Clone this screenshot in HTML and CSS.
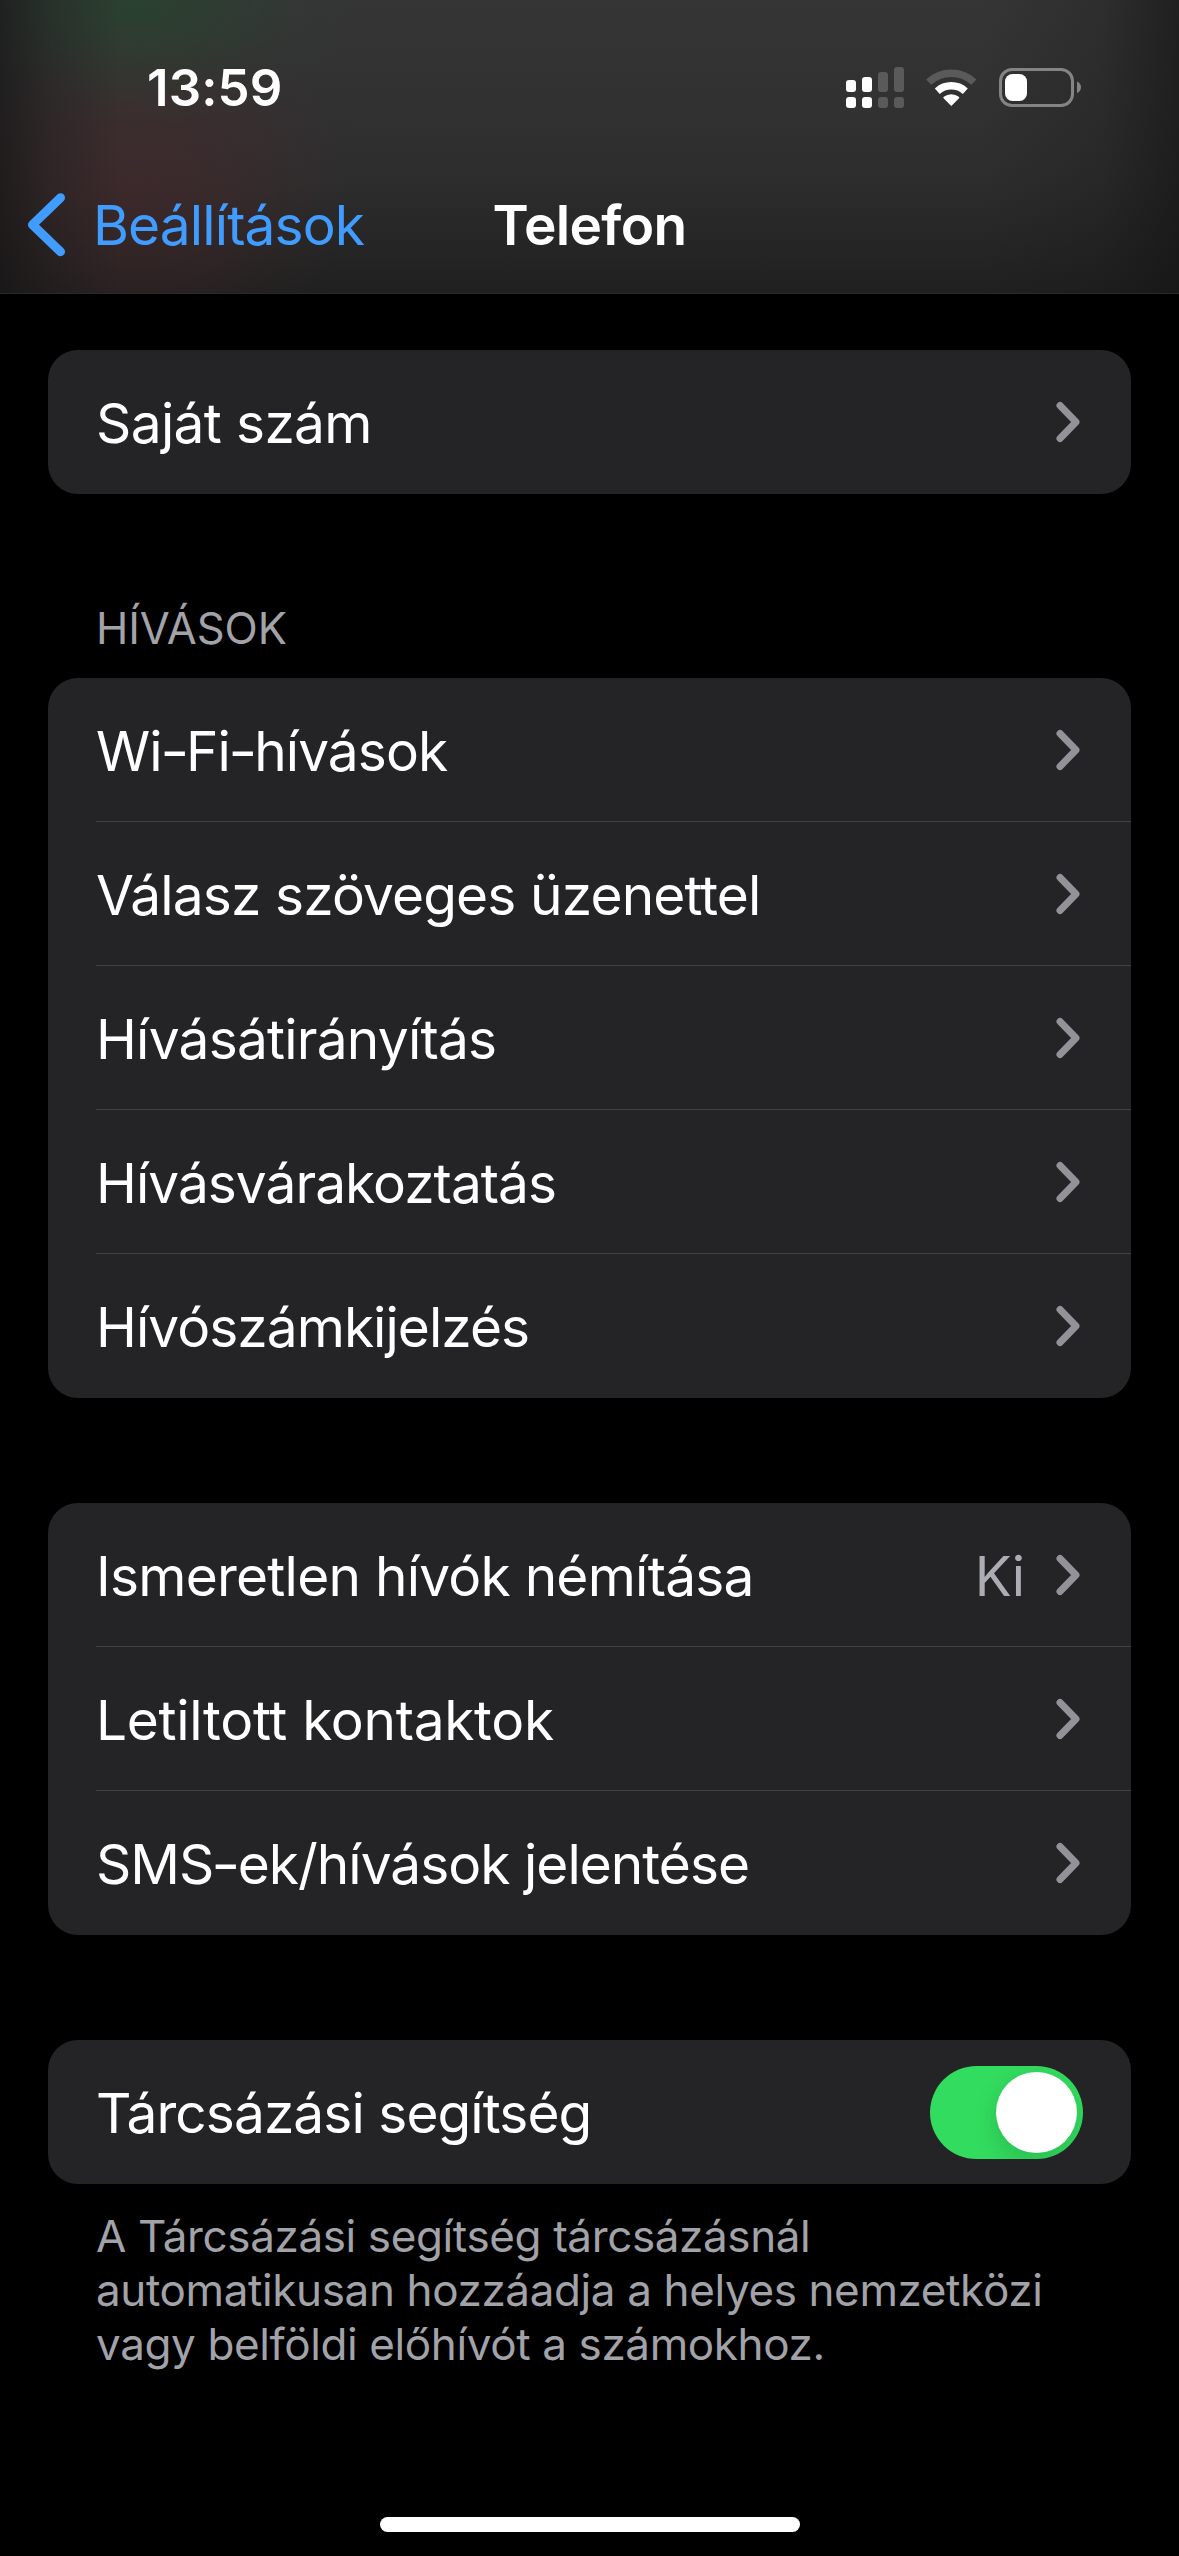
FILE: index.html
```html
<!DOCTYPE html>
<html lang="hu">
<head>
<meta charset="utf-8">
<title>Telefon</title>
<link rel="stylesheet" href="styles.css">
</head>
<body>
<svg class="defs" aria-hidden="true">
  <symbol id="chevron" viewBox="0 0 24 42"><path d="M4 4.500 20 21 4 37.500"/></symbol>
</svg>
<div class="screen">
  <header class="top">
    <div class="status">
      <span class="time">13:59</span>
      <svg class="status-icons" width="240" height="44" viewBox="844 66 240 44" aria-hidden="true">
        <g fill="#fff">
          <rect x="846" y="80" width="10" height="12" rx="3"/>
          <rect x="862" y="77" width="10" height="15" rx="3"/>
          <rect x="846" y="97" width="10" height="11" rx="3"/>
          <rect x="862" y="97" width="10" height="11" rx="3"/>
        </g>
        <g fill="#5a5a5b">
          <rect x="878" y="72" width="10" height="20" rx="3"/>
          <rect x="894" y="67" width="10" height="25" rx="3"/>
          <rect x="878" y="97" width="10" height="11" rx="3"/>
          <rect x="894" y="97" width="10" height="11" rx="3"/>
        </g>
        <path d="M928.7 82.100a33.200 33.200 0 0 1 45.200 0" fill="none" stroke="#5a5a5b" stroke-width="7.400"/>
        <path d="M937.300 91.200a20.800 20.800 0 0 1 28 0" fill="none" stroke="#fff" stroke-width="7.400"/>
        <path d="M951.300 106 943.600 98.300Q942.900 97.500 943.800 96.800a12 12 0 0 1 15 0Q959.700 97.500 959 98.300Z" fill="#fff"/>
        <rect x="1000.500" y="69.500" width="72" height="36" rx="11.500" fill="none" stroke="#848484" stroke-width="3"/>
        <rect x="1005" y="74" width="22" height="27" rx="7.500" fill="#fff"/>
        <path d="M1077 81.500Q1081 83.500 1081 87.300T1077 93.200Z" fill="#848484"/>
      </svg>
    </div>
    <nav class="nav">
      <a class="back">
        <svg class="back-icon" viewBox="0 0 38 64" aria-hidden="true"><path d="M32.500 4.700 4.500 31.700 32.500 58.700"/></svg>
        <span class="back-label">Beállítások</span>
      </a>
      <h1 class="title">Telefon</h1>
    </nav>
  </header>

  <main class="content">
    <section class="card">
      <div class="row"><span class="label t-own">Saját szám</span><svg class="chevron"><use href="#chevron"/></svg></div>
    </section>

    <h2 class="heading">HÍVÁSOK</h2>
    <section class="card">
      <div class="row"><span class="label t-wifi">Wi<span class="dash">-</span>Fi<span class="dash">-</span>hívások</span><svg class="chevron"><use href="#chevron"/></svg></div>
      <div class="row"><span class="label t-reply">Válasz szöveges üzenettel</span><svg class="chevron"><use href="#chevron"/></svg></div>
      <div class="row"><span class="label t-forward">Hívásátirányítás</span><svg class="chevron"><use href="#chevron"/></svg></div>
      <div class="row"><span class="label t-waiting">Hívásvárakoztatás</span><svg class="chevron"><use href="#chevron"/></svg></div>
      <div class="row"><span class="label t-id">Hívószámkijelzés</span><svg class="chevron"><use href="#chevron"/></svg></div>
    </section>

    <section class="card spaced">
      <div class="row"><span class="label t-unknown">Ismeretlen hívók némítása</span><span class="value">Ki</span><svg class="chevron"><use href="#chevron"/></svg></div>
      <div class="row"><span class="label t-blocked">Letiltott kontaktok</span><svg class="chevron"><use href="#chevron"/></svg></div>
      <div class="row"><span class="label t-sms">SMS<span class="dash">-</span>ek/hívások jelentése</span><svg class="chevron"><use href="#chevron"/></svg></div>
    </section>

    <section class="card spaced">
      <div class="row"><span class="label t-assist">Tárcsázási segítség</span><span class="toggle"><span class="knob"></span></span></div>
    </section>
    <p class="note">A Tárcsázási segítség tárcsázásnál<br>automatikusan hozzáadja a helyes nemzetközi<br>vagy belföldi előhívót a számokhoz.</p>
  </main>
  <div class="home"></div>
</div>
</body>
</html>
```
FILE: styles.css
```css
* { box-sizing: border-box; }
body {
  margin: 0;
  background: #000;
  color: #fff;
  font-family: Inter, "Liberation Sans", sans-serif;
}
.defs { display: none; }
.screen {
  display: flex;
  flex-direction: column;
  width: 1179px;
  height: 2556px;
  overflow: hidden;
}
.top {
  height: 294px;
  border-bottom: 1px solid #2a2a2b;
  background:
    linear-gradient(90deg, rgba(18,18,18,.6), rgba(18,18,18,.25) 50px, rgba(18,18,18,0) 120px, rgba(18,18,18,0) 980px, rgba(18,18,18,.2) 1100px, rgba(18,18,18,.6)),
    radial-gradient(ellipse 210px 130px at 140px 0, rgba(36,72,44,.65), rgba(36,72,44,.36) 40%, rgba(36,72,44,.1) 75%, rgba(36,72,44,0)),
    radial-gradient(ellipse 230px 190px at 135px 185px, rgba(80,38,40,.46), rgba(80,38,40,.3) 40%, rgba(80,38,40,.08) 78%, rgba(80,38,40,0)),
    linear-gradient(#353536, #313132 110px, #2d2d2e 180px, #202020);
}
.status {
  display: flex;
  justify-content: space-between;
  padding: 58px 95px 0 147px;
  height: 160px;
}
.time {
  font-size: 51px;
  font-weight: 600;
  line-height: 60px;
  letter-spacing: .1px;
}
.status-icons { margin-top: 8px; }
.nav {
  display: grid;
  grid-template-columns: 1fr auto 1fr;
  align-items: center;
  height: 130px;
  padding: 0 28px;
}
.back { display: flex; align-items: center; gap: 27px; color: #419cff; }
.back-icon { width: 38px; height: 64px; }
.back-icon path {
  fill: none;
  stroke: #419cff;
  stroke-width: 9;
  stroke-linecap: round;
  stroke-linejoin: round;
}
.back-label { font-size: 55px; line-height: 66px; letter-spacing: -.88px; }
.title { margin: 0; font-size: 55px; font-weight: 600; line-height: 66px; letter-spacing: -.68px; }
.content { flex: 1; padding: 56px 48px 0; }
.card { border-radius: 30px; background: #242426; overflow: hidden; }
.spaced { margin-top: 105px; }
.row {
  display: flex;
  align-items: center;
  height: 144px;
  margin-left: 48px;
  padding-right: 51px;
  border-bottom: 1px solid #424245;
}
.row:last-child { border-bottom-color: transparent; }
.label { flex: 1; font-size: 55px; line-height: 66px; padding-top: 2px; white-space: nowrap; }
.dash { display: inline-block; transform: scaleX(1.15); }
.t-own { letter-spacing: -.64px; }
.t-wifi { letter-spacing: -.95px; }
.t-reply { letter-spacing: -.86px; }
.t-forward { letter-spacing: -.77px; }
.t-waiting { letter-spacing: -.98px; }
.t-id { letter-spacing: -.95px; }
.t-unknown { letter-spacing: -.76px; }
.t-blocked { letter-spacing: -.3px; }
.t-sms { letter-spacing: -.98px; }
.t-assist { letter-spacing: -.93px; }
.value { margin-right: 32px; padding-top: 2px; font-size: 55px; line-height: 66px; letter-spacing: -1px; color: #acacb4; }
.chevron { width: 24px; height: 42px; }
#chevron path {
  fill: none;
  stroke: #929298;
  stroke-width: 7;
  stroke-linecap: round;
  stroke-linejoin: round;
}
.toggle {
  display: flex;
  justify-content: flex-end;
  width: 153px;
  height: 93px;
  margin: 1px -3px 0 0;
  padding: 6px;
  border-radius: 47px;
  background: #32dc5e;
  overflow: hidden;
}
.knob {
  width: 81px;
  height: 81px;
  border-radius: 50%;
  background: #fff;
  box-shadow: 0 9px 24px rgba(0,0,0,.15);
}
.heading {
  margin: 0 0 0 48px;
  height: 184px;
  padding-top: 108px;
  font-size: 43.500px;
  font-weight: 400;
  line-height: 52px;
  letter-spacing: -.1px;
  color: #a2a2a9;
}
.note {
  margin: 25px 0 0 48px;
  font-size: 44px;
  line-height: 54px;
  letter-spacing: -.38px;
  white-space: nowrap;
  color: #a2a2a9;
}
.home {
  width: 420px;
  height: 15px;
  margin: 0 auto 24px;
  border-radius: 8px;
  background: #fff;
}
```
